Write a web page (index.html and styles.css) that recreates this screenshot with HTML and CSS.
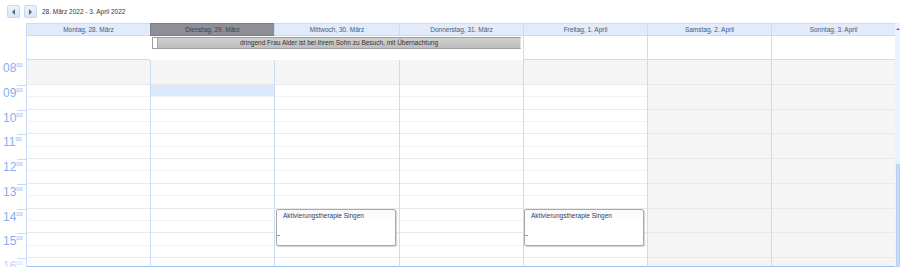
FILE: index.html
```html
<html>
    <head>
        <link rel="stylesheet" href="styles.css">
    </head>
    <body>
        <div class="toolbar">
            <button class="nav-btn"><span class="arrow left"></span></button>
            <button class="nav-btn"><span class="arrow right"></span></button>
            <span class="range">28. März 2022 - 3. April 2022</span>
        </div>

        <div class="calendar">
            <div class="corner"></div>
            <div class="day-head">Montag, 28. März</div>
            <div class="day-head today">Dienstag, 29. März</div>
            <div class="day-head">Mittwoch, 30. März</div>
            <div class="day-head">Donnerstag, 31. März</div>
            <div class="day-head">Freitag, 1. April</div>
            <div class="day-head">Samstag, 2. April</div>
            <div class="day-head">Sonntag, 3. April</div>

            <div class="scrollbar">
                <span class="scroll-up"></span>
                <span class="scroll-track"></span>
                <span class="scroll-thumb"></span>
            </div>

            <div class="corner allday-gutter"></div>
            <div class="allday"></div>
            <div class="allday"></div>
            <div class="allday"></div>
            <div class="allday"></div>
            <div class="allday"></div>
            <div class="allday"></div>
            <div class="allday"></div>
            <div class="allday-event"><span class="mark"></span><span class="allday-text">dringend Frau Alder ist bei ihrem Sohn zu Besuch, mit Übernachtung</span></div>

            <div class="gutter">
                <div class="hour"><span class="h">08</span><sup>00</sup></div>
                <div class="hour"><span class="h">09</span><sup>00</sup></div>
                <div class="hour"><span class="h">10</span><sup>00</sup></div>
                <div class="hour"><span class="h">11</span><sup>00</sup></div>
                <div class="hour"><span class="h">12</span><sup>00</sup></div>
                <div class="hour"><span class="h">13</span><sup>00</sup></div>
                <div class="hour"><span class="h">14</span><sup>00</sup></div>
                <div class="hour"><span class="h">15</span><sup>00</sup></div>
                <div class="hour last"><span class="h">16</span><sup>00</sup></div>
            </div>

            <div class="day work" id="mon"></div>
            <div class="day work" id="tue"></div>
            <div class="day work" id="wed">
                <div class="event"><span class="event-text">Aktivierungstherapie Singen</span><span class="tick"></span></div>
            </div>
            <div class="day work" id="thu"></div>
            <div class="day work" id="fri">
                <div class="event"><span class="event-text">Aktivierungstherapie Singen</span><span class="tick"></span></div>
            </div>
            <div class="day weekend" id="sat"></div>
            <div class="day weekend" id="sun"></div>
        </div>

        <script>
            // half hour slots from 08:00 to 16:30
            document.querySelectorAll('.day').forEach(day => {
                for (let i = 0; i < 18; i++) {
                    const slot = document.createElement('div');
                    slot.className = 'slot';
                    if (i % 2 === 1) slot.classList.add('half');
                    if (day.classList.contains('work') && i < 2) slot.classList.add('off');
                    if (day.id === 'tue' && i === 2) slot.classList.add('selected');
                    slot.style.gridRow = `${i + 1}`;
                    day.appendChild(slot);
                }
            });
        </script>
    </body>
</html>
```

FILE: styles.css
```css
body {
    margin: 0;
    background: #fff;
    color: #3a4766;
    font-family: "Liberation Sans", Arial, sans-serif;
    font-size: 6.5px;
    overflow: hidden;
    width: 900px;
    height: 268px;
}
.toolbar {
    display: flex;
    align-items: center;
    gap: 4px;
    height: 23px;
    padding-left: 7px;
    box-sizing: border-box;
}
.nav-btn {
    width: 13px;
    height: 13px;
    padding: 0;
    border: 1px solid #c9d8f0;
    border-radius: 2px;
    background: linear-gradient(#edf3fd, #d9e5f8);
    display: flex;
        align-items: center;
        justify-content: center;
}
.arrow {
    width: 0;
    height: 0;
    border-top: 3px solid transparent;
    border-bottom: 3px solid transparent;
}
.arrow.left {
    border-right: 3px solid #5b6478;
}
.arrow.right {
    border-left: 3px solid #5b6478;
}
.range {
    margin-left: 1px;
    color: #2e3550;
}
.calendar {
    display: grid;
    width: 900px;
    grid-template-columns: 26px 124px 124px 125px 124px 124px 124px 124px 5px;
    grid-template-rows: 13px 24px 207px;
}
.corner {
    background: #fff;
}
.day-head {
    background: #e1ebfc;
    border-top: 1px solid #c9dbf7;
    border-bottom: 1px solid #c9dbf7;
    border-left: 1px solid #c9dbf7;
    text-align: center;
    line-height: 11px;
    color: #4a5777;
}
.day-head.today {
    background: #8e8e96;
    border-color: #7e7e88;
    color: #3a3f55;
}
.allday {
    grid-row: 2;
    border-left: 1px solid #c9dbf7;
    border-bottom: 1px solid #c9dbf7;
}
.allday-gutter {
    grid-row: 2;
    grid-column: 1;
}
.allday-event {
    grid-row: 2;
    grid-column: 3 / 6;
    align-self: start;
    margin: 1px 2px 0 2px;
    height: 12px;
    box-sizing: border-box;
    border: 1px solid #9e9e9e;
    border-right-color: #e0e0e0;
    background: linear-gradient(#cfcfcf, #bebebe);
    display: flex;
    color: #333;
}
.mark {
    width: 4px;
    background: #fff;
    border-right: 1px solid #a8a8a8;
}
.allday-text {
    flex: 1;
    text-align: center;
    line-height: 10px;
}
.scrollbar {
    grid-column: 9;
    grid-row: 1 / 4;
    min-width: 0;
    background: #eaf2fd;
    display: flex;
    flex-direction: column;
    align-items: center;
}
.scroll-up {
    margin-top: 5px;
    width: 0;
    height: 0;
    border-left: 2px solid transparent;
    border-right: 2px solid transparent;
    border-bottom: 2px solid #4d6fa8;
}
.scroll-track {
    height: 134px;
}
.scroll-thumb {
    flex: 1;
    align-self: stretch;
    margin-left: 1px;
    border: 1px solid #b7cff3;
    border-radius: 1px;
    background: #c8dcfa;
}
.gutter {
    grid-row: 3;
    grid-column: 1;
    display: grid;
    grid-template-rows: repeat(9, 24.75px);
    overflow: hidden;
}
.hour {
    color: #86aef0;
    padding: 2px 0 0 3px;
    line-height: 1;
    background: linear-gradient(#c9dbf7, #c9dbf7) no-repeat right top / 9px 1px;
}
.hour:first-child {
    background: none;
}
.hour.last {
    color: #c3d6f7;
}
.hour .h {
    font-size: 12px;
}
.hour sup {
    font-size: 5.5px;
    vertical-align: top;
    position: relative;
    top: 1px;
}
.day {
    grid-row: 3;
    display: grid;
    grid-template-rows: repeat(18, 12.375px);
    border-left: 1px solid #c9dbf7;
    border-bottom: 1px solid #9fc0f3;
    overflow: hidden;
}
.slot {
    grid-column: 1;
    border-bottom: 1px solid #e6e6e6;
    box-sizing: border-box;
}
.slot.half {
    border-bottom: 1px solid #e9e9e9;
}
.slot:not(.half) {
    border-bottom-color: #f3f3f3;
}
.weekend .slot,
.slot.off {
    background: #f5f5f5;
}
.slot.selected {
    background: #dce9fc;
}
.event {
    grid-column: 1;
    grid-row: 13 / 16;
    z-index: 1;
    margin: 0 3px 0 1px;
    border: 1px solid #a9a9a9;
    border-radius: 2px;
    background: linear-gradient(#fafafa, #fff 40%);
    box-shadow: 1px 1px 1px rgba(0, 0, 0, 0.18);
    display: flex;
    flex-direction: column;
    padding: 2px 6px;
    color: #2c3a66;
}
.event-text {
    line-height: 8px;
}
.tick {
    width: 3px;
    margin: 15px 0 0 -6px;
    border-top: 1px solid #999;
}
#fri .event {
    margin-left: 0;
}
```
